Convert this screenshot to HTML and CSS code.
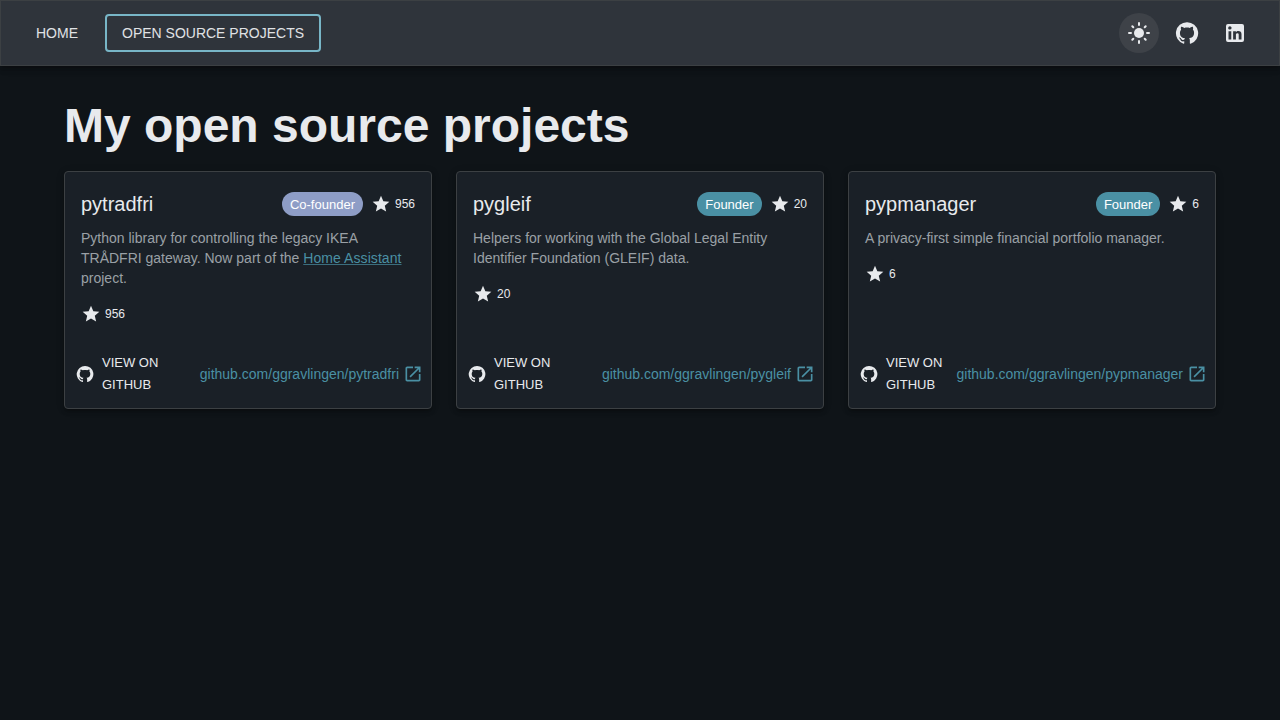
FILE: index.html
```html
<!DOCTYPE html>
<html lang="en">
<head>
<meta charset="utf-8">
<title>My open source projects</title>
<link rel="stylesheet" href="styles.css">
</head>
<body>
<svg class="sprite" aria-hidden="true">
  <symbol id="github" viewBox="0 0 24 24"><path d="M12 1.27a11 11 0 00-3.48 21.46c.55.09.73-.28.73-.55v-1.84c-3.03.64-3.67-1.46-3.67-1.46-.55-1.29-1.28-1.65-1.28-1.65-.92-.65.1-.65.1-.65 1.1 0 1.73 1.1 1.73 1.1.92 1.65 2.57 1.2 3.21.92a2 2 0 01.64-1.47c-2.47-.27-5.04-1.19-5.04-5.5 0-1.1.46-2.1 1.2-2.84a3.76 3.76 0 010-2.93s.91-.28 3.11 1.1c1.8-.49 3.7-.49 5.5 0 2.1-1.38 3.02-1.1 3.02-1.1a3.76 3.76 0 01.1 2.93c.83.74 1.2 1.74 1.2 2.94 0 4.21-2.57 5.13-5.04 5.4.45.37.82.92.82 2.02v3.03c0 .27.1.64.73.55A11 11 0 0012 1.27"/></symbol>
  <symbol id="linkedin" viewBox="0 0 24 24"><path d="M19 3a2 2 0 0 1 2 2v14a2 2 0 0 1-2 2H5a2 2 0 0 1-2-2V5a2 2 0 0 1 2-2h14m-.5 15.5v-5.3a3.26 3.26 0 0 0-3.26-3.26c-.85 0-1.84.52-2.32 1.3v-1.11h-2.79v8.37h2.79v-4.93c0-.77.62-1.4 1.39-1.4a1.4 1.4 0 0 1 1.4 1.4v4.93h2.79M6.88 8.56a1.68 1.68 0 0 0 1.68-1.68c0-.93-.75-1.69-1.68-1.69a1.69 1.69 0 0 0-1.69 1.69c0 .93.76 1.68 1.69 1.68m1.39 9.94v-8.37H5.5v8.37h2.77z"/></symbol>
  <symbol id="sun" viewBox="0 0 24 24"><circle cx="12" cy="12" r="5"/><path d="M12 2v2M12 20v2M2 12h2M20 12h2M5.3 5.3l1 1M17.7 17.7l1 1M5.3 18.7l1-1M17.7 6.3l1-1" fill="none" stroke="currentColor" stroke-width="2" stroke-linecap="round"/></symbol>
  <symbol id="star" viewBox="0 0 24 24"><path d="M12 17.27 18.18 21l-1.64-7.03L22 9.24l-7.19-.61L12 2 9.19 8.63 2 9.24l5.46 4.73L5.82 21z"/></symbol>
  <symbol id="open" viewBox="0 0 24 24"><path d="M19 19H5V5h7V3H5c-1.11 0-2 .9-2 2v14c0 1.1.89 2 2 2h14c1.1 0 2-.9 2-2v-7h-2zM14 3v2h3.59l-9.83 9.83 1.41 1.41L19 6.41V10h2V3z"/></symbol>
</svg>
<header class="bar">
  <nav class="nav">
    <a class="nav-link">HOME</a>
    <a class="nav-link active">OPEN SOURCE PROJECTS</a>
  </nav>
  <div class="tools">
    <button class="tool lit" aria-label="Light mode"><svg><use href="#sun"/></svg></button>
    <button class="tool" aria-label="GitHub"><svg><use href="#github"/></svg></button>
    <button class="tool" aria-label="LinkedIn"><svg><use href="#linkedin"/></svg></button>
  </div>
</header>
<main class="page">
  <h1 class="title">My open source projects</h1>
  <div class="cards">
    <article class="card">
      <div class="content">
        <div class="head"><h2 class="name">pytradfri</h2><span class="chip cofounder">Co-founder</span><span class="stars"><svg><use href="#star"/></svg>956</span></div>
        <p class="text">Python library for controlling the legacy IKEA TRÅDFRI gateway. Now part of the <a class="link">Home Assistant</a> project.</p>
        <span class="stars below"><svg><use href="#star"/></svg>956</span>
      </div>
      <div class="actions">
        <a class="view"><svg><use href="#github"/></svg><span>VIEW ON<br>GITHUB</span></a>
        <a class="repo">github.com/ggravlingen/pytradfri<svg><use href="#open"/></svg></a>
      </div>
    </article>
    <article class="card">
      <div class="content">
        <div class="head"><h2 class="name">pygleif</h2><span class="chip">Founder</span><span class="stars"><svg><use href="#star"/></svg>20</span></div>
        <p class="text">Helpers for working with the Global Legal Entity Identifier Foundation (GLEIF) data.</p>
        <span class="stars below"><svg><use href="#star"/></svg>20</span>
      </div>
      <div class="actions">
        <a class="view"><svg><use href="#github"/></svg><span>VIEW ON<br>GITHUB</span></a>
        <a class="repo">github.com/ggravlingen/pygleif<svg><use href="#open"/></svg></a>
      </div>
    </article>
    <article class="card">
      <div class="content">
        <div class="head"><h2 class="name">pypmanager</h2><span class="chip">Founder</span><span class="stars"><svg><use href="#star"/></svg>6</span></div>
        <p class="text">A privacy-first simple financial portfolio manager.</p>
        <span class="stars below"><svg><use href="#star"/></svg>6</span>
      </div>
      <div class="actions">
        <a class="view"><svg><use href="#github"/></svg><span>VIEW ON<br>GITHUB</span></a>
        <a class="repo">github.com/ggravlingen/pypmanager<svg><use href="#open"/></svg></a>
      </div>
    </article>
  </div>
</main>
</body>
</html>
```
FILE: styles.css
```css
* { box-sizing: border-box; }
body {
  margin: 0;
  min-height: 100vh;
  background: #0f1418;
  color: #e8eaed;
  font-family: "Liberation Sans", Arial, sans-serif;
}
svg { fill: currentColor; flex: none; }
.sprite { display: none; }
.bar {
  display: flex;
  justify-content: space-between;
  align-items: center;
  height: 66px;
  padding: 0 24px;
  background: #2f343b;
  border: 1px solid #3c4043;
  box-shadow: 0 2px 4px -1px rgba(0,0,0,.2), 0 4px 5px rgba(0,0,0,.14), 0 1px 10px rgba(0,0,0,.12);
}
.nav { display: flex; gap: 16px; }
.nav-link {
  padding: 5px 11px;
  height: 38px;
  line-height: 28px;
  font-size: 14px;
  color: #e0e2e5;
}
.nav-link.active {
  padding: 4px 15px;
  border: 2px solid #78b6c7;
  border-radius: 4px;
  line-height: 27px;
}
.tools { display: flex; gap: 8px; }
.tool {
  width: 40px;
  height: 40px;
  padding: 8px;
  border: 0;
  border-radius: 50%;
  background: none;
  color: #e8eaed;
}
.tool.lit { background: #3e4248; }
.tool svg { display: block; width: 24px; height: 24px; }
.page { padding: 32px 64px 0; }
.title {
  margin: 0 0 17px;
  font-size: 48px;
  line-height: 56px;
  font-weight: 700;
}
.cards { display: grid; grid-template-columns: repeat(3, 1fr); gap: 24px; }
.card {
  display: flex;
  flex-direction: column;
  height: 238px;
  background: #1a2027;
  border: 1px solid #3c4043;
  border-radius: 4px;
  box-shadow: 0 3px 3px -2px rgba(0,0,0,.2), 0 3px 4px rgba(0,0,0,.14), 0 1px 8px rgba(0,0,0,.12);
}
.content { flex: 1; padding: 16px; }
.head { display: flex; align-items: center; height: 32px; }
.name { flex: 1; margin: 0; font-size: 20px; line-height: 32px; font-weight: 400; }
.chip {
  height: 24px;
  padding: 0 8px;
  border-radius: 12px;
  background: #4a90a4;
  color: #fff;
  font-size: 13px;
  line-height: 25px;
}
.cofounder { background: #8e9dc6; }
.stars {
  display: flex;
  align-items: center;
  gap: 4px;
  margin-left: 8px;
  font-size: 12px;
  line-height: 20px;
}
.stars svg { width: 20px; height: 20px; }
.below { margin: 16px 0 0; }
.text { margin: 8px 0 0; color: #9aa0a6; font-size: 14px; line-height: 20px; }
.link {
  color: #4a90a4;
  letter-spacing: .07px;
  text-decoration: underline;
  text-decoration-color: rgba(74,144,164,.7);
}
.actions { display: flex; align-items: center; justify-content: space-between; padding: 8px 8px 12px 11px; }
.view { display: flex; align-items: center; gap: 8px; font-size: 13px; line-height: 22px; }
.view svg { width: 18px; height: 18px; }
.repo { display: flex; align-items: center; gap: 4px; color: #4a90a4; font-size: 14px; line-height: 20px; }
.repo svg { width: 20px; height: 20px; }
```
